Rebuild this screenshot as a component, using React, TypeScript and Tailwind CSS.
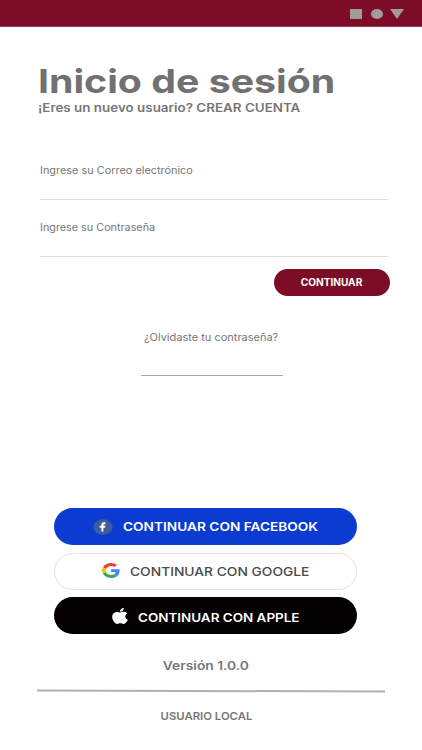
import React from 'react';

const FacebookIcon: React.FC = () => (
  <svg className="h-4 w-5 shrink-0" viewBox="0 0 20 16">
    <ellipse cx="10" cy="8" rx="9.6" ry="7.8" fill="#3f5ba0" />
    <path d="M8.4 12.4V8.8H6.7V6.8h1.7V5.7c0-1.6 1-2.4 2.6-2.4.7 0 1.2.1 1.5.1v1.8h-1.1c-.8 0-1 .3-1 .9v.7h2l-.3 2h-1.7v3.6z" fill="#fff" />
  </svg>
);

const GoogleIcon: React.FC = () => (
  <svg className="mb-[3px] h-[15px] w-[18px] shrink-0" viewBox="0 0 48 48" preserveAspectRatio="none">
    <path fill="#EA4335" d="M24 9.5c3.54 0 6.71 1.22 9.21 3.6l6.85-6.85C35.9 2.38 30.47 0 24 0 14.62 0 6.51 5.38 2.56 13.22l7.98 6.19C12.43 13.72 17.74 9.5 24 9.5z" />
    <path fill="#4285F4" d="M46.98 24.55c0-1.57-.15-3.09-.38-4.55H24v9.02h12.94c-.58 2.96-2.26 5.48-4.78 7.18l7.73 6c4.51-4.18 7.09-10.36 7.09-17.65z" />
    <path fill="#FBBC05" d="M10.53 28.59c-.48-1.45-.76-2.99-.76-4.59s.27-3.14.76-4.59l-7.98-6.19C.92 16.46 0 20.12 0 24c0 3.88.92 7.54 2.56 10.78l7.97-6.19z" />
    <path fill="#34A853" d="M24 48c6.48 0 11.93-2.13 15.89-5.81l-7.73-6c-2.15 1.45-4.92 2.3-8.16 2.3-6.26 0-11.57-4.22-13.47-9.91l-7.98 6.19C6.51 42.62 14.62 48 24 48z" />
  </svg>
);

const AppleIcon: React.FC = () => (
  <svg className="h-4 w-4 shrink-0" viewBox="2 0 20 24" preserveAspectRatio="none">
    <path fill="#fff" d="M12.152 6.896c-.948 0-2.415-1.078-3.96-1.04-2.04.027-3.91 1.183-4.961 3.014-2.117 3.675-.546 9.103 1.519 12.09 1.013 1.454 2.208 3.09 3.792 3.039 1.52-.065 2.09-.987 3.935-.987 1.831 0 2.35.987 3.96.948 1.637-.026 2.676-1.48 3.676-2.948 1.156-1.688 1.636-3.325 1.662-3.415-.039-.013-3.182-1.221-3.22-4.857-.026-3.04 2.48-4.494 2.597-4.559-1.429-2.09-3.623-2.324-4.39-2.376-2-.156-3.675 1.09-4.61 1.09zM15.53 3.83c.843-1.012 1.4-2.427 1.245-3.83-1.207.052-2.662.805-3.532 1.818-.78.896-1.454 2.338-1.273 3.714 1.338.104 2.715-.688 3.559-1.701" />
  </svg>
);

const App: React.FC = () => {
  return (
    <div className="flex h-[750px] w-[422px] flex-col overflow-hidden bg-white font-['Inter',sans-serif] whitespace-nowrap text-[#767676]">
      {/* Status bar */}
      <header className="flex h-[27px] shrink-0 items-center justify-end gap-[9px] border-b border-[#96405a] bg-[#7d0c26] pt-px pr-[18px]">
        <div className="h-[10px] w-3 bg-[#a39a9c]"></div>
        <div className="h-[10px] w-3 rounded-[50%] bg-[#a39a9c]"></div>
        <svg className="-ml-0.5 h-[10px] w-[14px]" viewBox="0 0 14 10">
          <path d="M0 0h14L7 10z" fill="#a39a9c" />
        </svg>
      </header>

      <main className="flex flex-col">
        {/* Title */}
        <section className="flex h-[135px] flex-col items-start pt-[34px]">
          <h1 className="ml-[37.5px] h-10 origin-left scale-x-[1.19] text-[33px] leading-10 font-bold text-[#717171]">
            Inicio de sesión
          </h1>
          <p className="mt-px ml-[38px] h-3 origin-left scale-x-[1.165] text-[11.5px] leading-3 font-semibold">
            ¡Eres un nuevo usuario? CREAR CUENTA
          </p>
        </section>

        {/* Form */}
        <form className="flex flex-col">
          <label className="ml-10 flex h-[38px] w-[348px] items-start border-b border-[#dedede]">
            <span className="origin-left scale-x-[1.09] text-[10px] leading-4">Ingrese su Correo electrónico</span>
          </label>
          <label className="ml-10 flex h-[57px] w-[348px] items-start border-b border-[#dedede] pt-[19px]">
            <span className="origin-left scale-x-[1.08] text-[10px] leading-4">Ingrese su Contraseña</span>
          </label>
          <button type="button" className="mt-3 ml-[274px] flex h-[27px] w-[116px] items-center justify-center rounded-full bg-[#7d0c26] text-white">
            <span className="mr-px scale-x-[1.01] text-[10px] font-bold">CONTINUAR</span>
          </button>
          <div className="mt-[33px] ml-[141px] flex h-[47px] w-[142px] justify-center border-b border-[#aaa6a7]">
            <a className="mr-[2px] h-4 scale-x-[1.1] text-[10px] leading-4">¿Olvidaste tu contraseña?</a>
          </div>
        </form>

        {/* Social login */}
        <section className="mt-[132px] ml-[54px] flex w-[303px] flex-col">
          <button type="button" className="flex h-[37px] items-center rounded-full bg-[#0b3bd1] pl-[39px] text-white">
            <FacebookIcon />
            <span className="mt-px ml-[10px] origin-left scale-x-[1.14] text-[12px] font-semibold">CONTINUAR CON FACEBOOK</span>
          </button>
          <button type="button" className="mt-2 flex h-[37px] items-center rounded-full border border-[#e2e2e4] pl-[47px] text-[#4a4a4a]">
            <GoogleIcon />
            <span className="mt-px ml-[10px] origin-left scale-x-[1.15] text-[12px] font-medium">CONTINUAR CON GOOGLE</span>
          </button>
          <button type="button" className="mt-[7px] flex h-[37px] items-center rounded-full bg-[#050001] pl-[58px] text-white">
            <AppleIcon />
            <span className="mt-1 ml-[10px] origin-left scale-x-[1.12] text-[12px] font-semibold">CONTINUAR CON APPLE</span>
          </button>
        </section>
      </main>

      {/* Footer */}
      <footer className="flex flex-col">
        <p className="mt-6 w-[412px] text-center text-[11.5px] leading-4 font-semibold">
          <span className="inline-block scale-x-[1.2]">Versión 1.0.0</span>
        </p>
        <div className="mt-4 ml-[37px] h-[1.5px] w-[348px] rotate-[0.16deg] bg-[#b0b0b0]"></div>
        <p className="mt-[17px] w-[412px] text-center text-[10.5px] leading-4 font-semibold">
          <span className="inline-block scale-x-[1.08]">USUARIO LOCAL</span>
        </p>
      </footer>
    </div>
  );
};

export default App;
